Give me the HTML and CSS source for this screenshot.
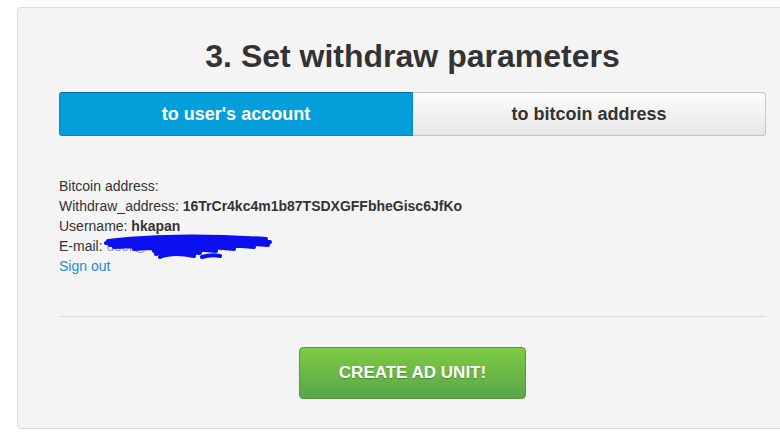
FILE: index.html
```html
<!DOCTYPE html>
<html lang="en">
<head>
    <meta charset="UTF-8">
    <meta name="viewport" content="width=device-width, initial-scale=1.0">
    <title>Set withdraw parameters</title>
    <link rel="stylesheet" href="styles.css">
</head>
<body>
    <div class="page">
        <div class="panel">
            <h1 class="title">3. Set withdraw parameters</h1>

            <!-- Withdraw target switch -->
            <div class="tabs">
                <button class="tab active">to user's account</button>
                <button class="tab">to bitcoin address</button>
            </div>

            <div class="info">
                <div>Bitcoin address:</div>
                <div>Withdraw_address: <b>16TrCr4kc4m1b87TSDXGFFbheGisc6JfKo</b></div>
                <div>Username: <b>hkapan</b></div>
                <div class="email">E-mail: <span class="email-value">user@example.com</span>
                    <svg class="scribble" width="170" height="30" viewBox="0 0 170 30">
                        <path d="M4 8 C40 3 100 2 162 6 M2 10 C50 6 110 5 166 9 M6 12 C50 9 120 8 164 12 M10 14 C60 11 120 11 150 14 M30 16 C70 13 110 14 130 16 M50 18 C70 15 95 16 112 18 M52 21 C64 17 84 18 96 20 M56 24 C66 20 80 21 90 23 M98 24 C104 22 112 22 116 23"
                              fill="none" stroke="#0a10f0" stroke-width="4" stroke-linecap="round"/>
                    </svg>
                </div>
                <a href="#" class="signout">Sign out</a>
            </div>

            <div class="divider"></div>

            <div class="actions">
                <button class="create-btn">CREATE AD UNIT!</button>
            </div>
        </div>
    </div>
</body>
</html>
```

FILE: styles.css
```css
body {
    margin: 0;
    background-color: #fff;
    font-family: "Liberation Sans", Arial, sans-serif;
    color: #333;
    overflow: hidden;
}

.page {
    padding: 7px 0 0 17px;
}

.panel {
    width: 791px;
    height: 422px;
    box-sizing: border-box;
    padding: 0 41px;
    background-color: #f4f4f4;
    border: 1px solid #dcdcdc;
    border-radius: 4px;
}

.title {
    margin: 0;
    padding-top: 30px;
    height: 54px;
    font-size: 32px;
    line-height: 37px;
    text-align: center;
    color: #333;
}

.tabs {
    display: flex;
}

.tab {
    flex: 1;
    height: 44px;
    font-family: "Liberation Sans", Arial, sans-serif;
    font-size: 18px;
    font-weight: bold;
    color: #333;
    background: linear-gradient(#fdfdfd, #e6e6e6);
    border: 1px solid #c6c6c6;
    border-left: none;
    border-radius: 0 3px 3px 0;
    cursor: pointer;
}

.tab.active {
    color: #fff;
    background: #049fda;
    border: 1px solid #0488bb;
    border-top-color: #066f98;
    border-radius: 3px 0 0 3px;
}

.info {
    padding-top: 40px;
    font-size: 14px;
    line-height: 20px;
}

.email {
    position: relative;
}

.email-value {
    color: #999;
}

.scribble {
    position: absolute;
    left: 45px;
    top: -3px;
}

.signout {
    color: #1b8fd2;
    text-decoration: none;
}

.divider {
    margin-top: 40px;
    border-top: 1px solid #ddd;
}

.actions {
    display: flex;
    justify-content: center;
    padding-top: 30px;
}

.create-btn {
    width: 227px;
    height: 52px;
    font-family: "Liberation Sans", Arial, sans-serif;
    font-size: 17px;
    font-weight: bold;
    color: #fff;
    text-shadow: 0 1px 1px rgba(0, 0, 0, 0.25);
    background: linear-gradient(#7fcb43, #58a64b);
    border: 1px solid #52993f;
    border-radius: 4px;
    cursor: pointer;
}
```
